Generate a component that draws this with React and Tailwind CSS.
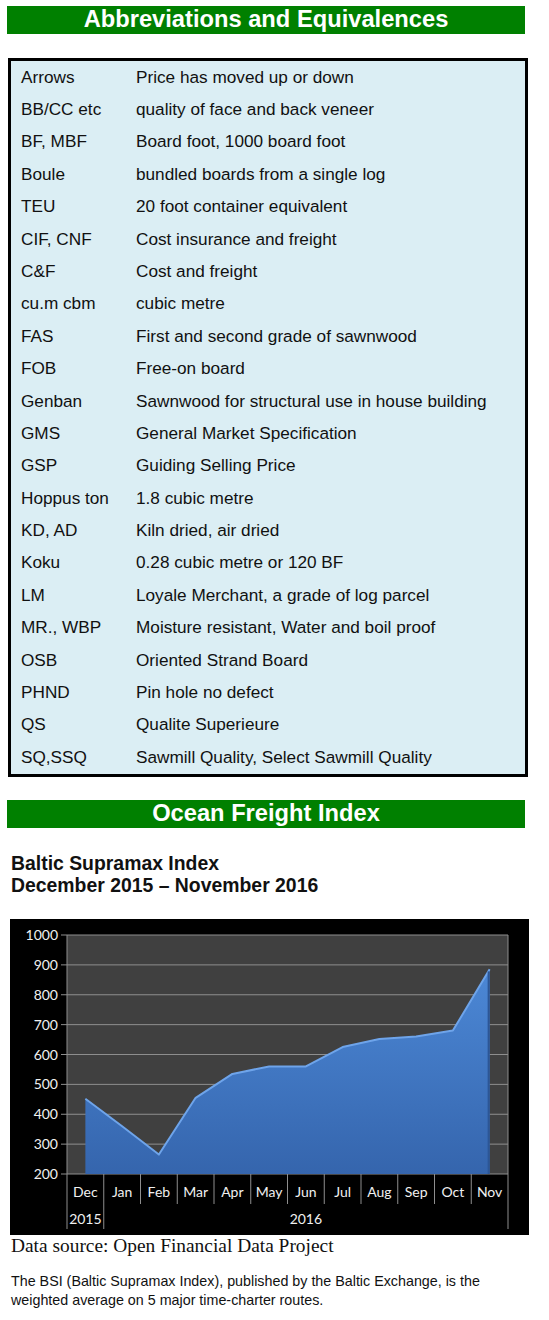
import React from "react";

const ROWS = [
  ["Arrows", "Price has moved up or down"],
  ["BB/CC etc", "quality of face and back veneer"],
  ["BF, MBF", "Board foot, 1000 board foot"],
  ["Boule", "bundled boards from a single log"],
  ["TEU", "20 foot container equivalent"],
  ["CIF, CNF", "Cost insurance and freight"],
  ["C&F", "Cost and freight"],
  ["cu.m cbm", "cubic metre"],
  ["FAS", "First and second grade of sawnwood"],
  ["FOB", "Free-on board"],
  ["Genban", "Sawnwood for structural use in house building"],
  ["GMS", "General Market Specification"],
  ["GSP", "Guiding Selling Price"],
  ["Hoppus ton", "1.8 cubic metre"],
  ["KD, AD", "Kiln dried, air dried"],
  ["Koku", "0.28 cubic metre or 120 BF"],
  ["LM", "Loyale Merchant, a grade of log parcel"],
  ["MR., WBP", "Moisture resistant, Water and boil proof"],
  ["OSB", "Oriented Strand Board"],
  ["PHND", "Pin hole no defect"],
  ["QS", "Qualite Superieure"],
  ["SQ,SSQ", "Sawmill Quality, Select Sawmill Quality"],
];

const MONTHS = ["Dec", "Jan", "Feb", "Mar", "Apr", "May", "Jun", "Jul", "Aug", "Sep", "Oct", "Nov"];
const VALUES = [452, 360, 265, 455, 535, 560, 560, 625, 652, 660, 680, 885];

// plot geometry (inside the black chart box)
const PX = 57;
const PY = 16;
const PW = 441;
const PH = 239;
const COL = PW / 12;
const yOf = (v) => PY + PH - ((v - 200) * PH) / 800;

function SectionBar({ children }) {
  return (
    <div className="ml-[7px] w-[518px] h-[28px] bg-[#008000] flex items-center justify-center">
      <span className="text-white font-bold text-[23.7px] leading-none font-['Liberation_Sans',Arial,sans-serif]">
        {children}
      </span>
    </div>
  );
}

function BsiChart() {
  const pts = VALUES.map((v, i) => [PX + COL * (i + 0.5), yOf(v)]);
  const bottom = PY + PH;
  const area =
    `M${pts[0][0]},${bottom} ` +
    pts.map(([x, y]) => `L${x},${y}`).join(" ") +
    ` L${pts[pts.length - 1][0]},${bottom} Z`;
  const topLine = pts.map(([x, y], i) => `${i ? "L" : "M"}${x},${y}`).join(" ");

  return (
    <svg width="519" height="316" viewBox="0 0 519 316" className="block">
      <defs>
        <linearGradient id="bsiFill" x1="0" y1="0" x2="0" y2="1">
          <stop offset="0" stopColor="#4c88d6" />
          <stop offset="1" stopColor="#3565ad" />
        </linearGradient>
      </defs>
      <rect x="0" y="0" width="519" height="316" fill="#000" />
      <rect x={PX} y={PY} width={PW} height={PH} fill="#404040" />
      {[1000, 900, 800, 700, 600, 500, 400, 300, 200].map((v) => {
        const y = yOf(v);
        return (
          <g key={v}>
            <line x1={PX - 6} x2={PX + PW} y1={y} y2={y} stroke="#8e8e8e" strokeWidth="1" />
            <text
              x="48"
              y={y + 5}
              textAnchor="end"
              fill="#f0f0f0"
              fontSize="14"
              fontFamily="Lato, 'DejaVu Sans', sans-serif"
            >
              {v}
            </text>
          </g>
        );
      })}
      <path d={area} fill="url(#bsiFill)" />
      <path d={topLine} fill="none" stroke="#6ea4ea" strokeWidth="2" strokeLinejoin="round" />
      <line
        x1={pts[11][0] - 1}
        x2={pts[11][0] - 1}
        y1={pts[11][1] + 2}
        y2={bottom}
        stroke="#2c5696"
        strokeWidth="2"
      />
      <line x1={PX} x2={PX} y1={PY} y2={310} stroke="#8e8e8e" strokeWidth="1" />
      <line x1={PX + PW} x2={PX + PW} y1={PY} y2={310} stroke="#8e8e8e" strokeWidth="1" />
      <line x1={PX + COL} x2={PX + COL} y1={bottom} y2={310} stroke="#8e8e8e" strokeWidth="1" />
      {MONTHS.map((m, i) => (
        <g key={m}>
          {i > 1 && (
            <line
              x1={PX + COL * i}
              x2={PX + COL * i}
              y1={bottom}
              y2={285}
              stroke="#8e8e8e"
              strokeWidth="1"
            />
          )}
          <text
            x={PX + COL * (i + 0.5)}
            y="278"
            textAnchor="middle"
            fill="#f0f0f0"
            fontSize="14"
            fontFamily="Lato, 'DejaVu Sans', sans-serif"
          >
            {m}
          </text>
        </g>
      ))}
      <text
        x={PX + COL / 2}
        y="305"
        textAnchor="middle"
        fill="#f0f0f0"
        fontSize="14"
        fontFamily="Lato, 'DejaVu Sans', sans-serif"
      >
        2015
      </text>
      <text
        x={PX + COL + (PW - COL) / 2}
        y="305"
        textAnchor="middle"
        fill="#f0f0f0"
        fontSize="14"
        fontFamily="Lato, 'DejaVu Sans', sans-serif"
      >
        2016
      </text>
    </svg>
  );
}

export default function App() {
  return (
    <div className="w-[549px] bg-white pt-[6px] pb-[8px] text-[#111] font-['Liberation_Sans',Arial,sans-serif]">
      <SectionBar>Abbreviations and Equivalences</SectionBar>

      {/* Abbreviations table */}
      <div className="ml-[8px] mt-[24px] w-[520px] border-[3px] border-black bg-[#dbeef4]">
        {ROWS.map(([abbr, meaning]) => (
          <div key={abbr} className="h-[32.4px] flex items-center text-[17.2px] leading-none">
            <span className="w-[125px] pl-[10px] shrink-0">{abbr}</span>
            <span>{meaning}</span>
          </div>
        ))}
      </div>

      <div className="mt-[23px]">
        <SectionBar>Ocean Freight Index</SectionBar>
      </div>

      <div className="ml-[11px] mt-[24px] font-bold text-[19.4px] leading-[22px]">
        <div>Baltic Supramax Index</div>
        <div>December 2015 – November 2016</div>
      </div>

      <div className="ml-[10px] mt-[23px] w-[519px]">
        <BsiChart />
      </div>

      <p className="ml-[11px] mt-[1px] text-[19.4px] leading-[20px] font-['Liberation_Serif','Times_New_Roman',serif]">
        Data source: Open Financial Data Project
      </p>

      <p className="ml-[11px] mt-[16px] w-[510px] text-[14.3px] leading-[19px]">
        The BSI (Baltic Supramax Index), published by the Baltic Exchange, is the weighted average on 5
        major time-charter routes.
      </p>
    </div>
  );
}
